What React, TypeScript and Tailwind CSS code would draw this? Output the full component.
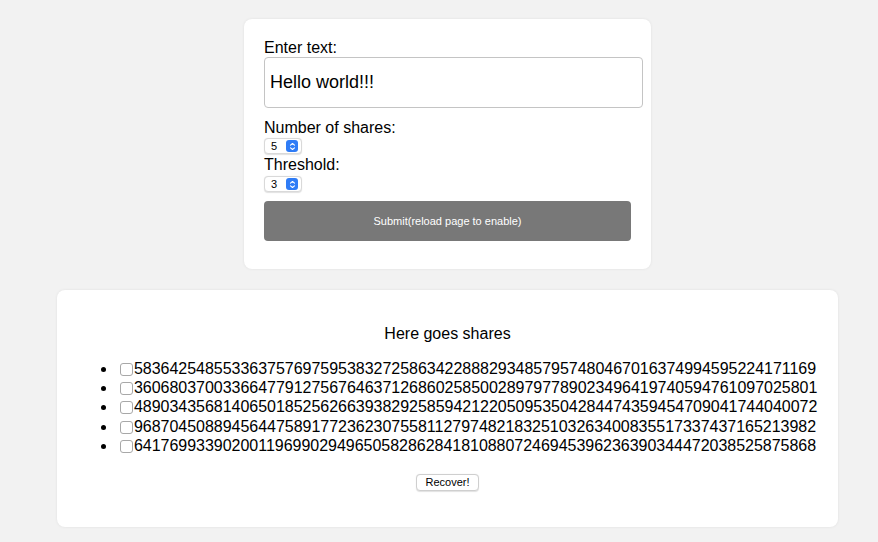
import React from "react";

const shares = [
  "58364254855336375769759538327258634228882934857957480467016374994595224171169",
  "36068037003366477912756764637126860258500289797789023496419740594761097025801",
  "48903435681406501852562663938292585942122050953504284474359454709041744040072",
  "96870450889456447589177236230755811279748218325103263400835517337437165213982",
  "64176993390200119699029496505828628418108807246945396236390344472038525875868",
];

function FakeSelect({ value }: { value: string }) {
  return (
    <div className="flex h-[16px] w-[38px] items-center rounded-[4px] border border-[#d9d9d9] bg-white pl-[6px] pr-[3px] shadow-[0_0.5px_1px_rgba(0,0,0,0.12)]">
      <span className="flex-1 text-[11px] leading-none text-black">{value}</span>
      <span className="flex h-[12px] w-[12px] items-center justify-center rounded-[3px] bg-[#2f7cf6]">
        <svg width="7" height="9" viewBox="0 0 7 9" fill="none">
          <path d="M1.5 3.2 3.5 1.5 5.5 3.2" stroke="white" strokeWidth="1.1" strokeLinecap="round" strokeLinejoin="round" />
          <path d="M1.5 5.8 3.5 7.5 5.5 5.8" stroke="white" strokeWidth="1.1" strokeLinecap="round" strokeLinejoin="round" />
        </svg>
      </span>
    </div>
  );
}

export default function App() {
  return (
    <div className="min-h-[542px] bg-[#f2f2f2] pl-[17px] pt-[19px] font-['Liberation_Sans',Arial,sans-serif] text-black">
      <div className="flex flex-col items-center">
        {/* form card */}
        <div className="w-[407px] rounded-[8px] bg-white px-[20px] pb-[28px] pt-[19px] shadow-[0_0_3px_rgba(0,0,0,0.08)]">
          <div className="text-[16px] leading-[19px]">Enter text:</div>
          <div className="flex h-[51px] w-[379px] items-center rounded-[4px] border border-[#c4c4c4] pl-[5px] text-[18px]">
            Hello world!!!
          </div>
          <div className="mt-[10px] text-[16px] leading-[19px]">Number of shares:</div>
          <div className="mt-[1px]">
            <FakeSelect value="5" />
          </div>
          <div className="mt-[1px] text-[16px] leading-[19px]">Threshold:</div>
          <div className="mt-[2px]">
            <FakeSelect value="3" />
          </div>
          <div className="mt-[9px] flex h-[40px] w-[367px] items-center justify-center rounded-[4px] bg-[#787878] text-[11px] text-white">
            Submit(reload page to enable)
          </div>
        </div>

        {/* shares card */}
        <div className="mt-[21px] w-[781px] rounded-[8px] bg-white px-[20px] pb-[36px] pt-[35px] shadow-[0_0_3px_rgba(0,0,0,0.08)]">
          <div className="text-center text-[16px] leading-[18px]">Here goes shares</div>
          <ul className="mt-[16px] list-disc pl-[40px] text-[16px] leading-[19.2px] tracking-[-0.025px]">
            {shares.map((s) => (
              <li key={s} className="whitespace-nowrap">
                <span className="ml-[3px] mr-[1px] inline-block h-[13px] w-[13px] translate-y-[2px] rounded-[3px] border border-[#a8a8a8] bg-white" />
                {s}
              </li>
            ))}
          </ul>
          <div className="mt-[19px] flex justify-center">
            <div className="flex h-[17px] w-[63px] items-center justify-center rounded-[4px] border border-[#cfcfcf] bg-white text-[11px] shadow-[0_0.5px_1px_rgba(0,0,0,0.12)]">
              Recover!
            </div>
          </div>
        </div>
      </div>
    </div>
  );
}
